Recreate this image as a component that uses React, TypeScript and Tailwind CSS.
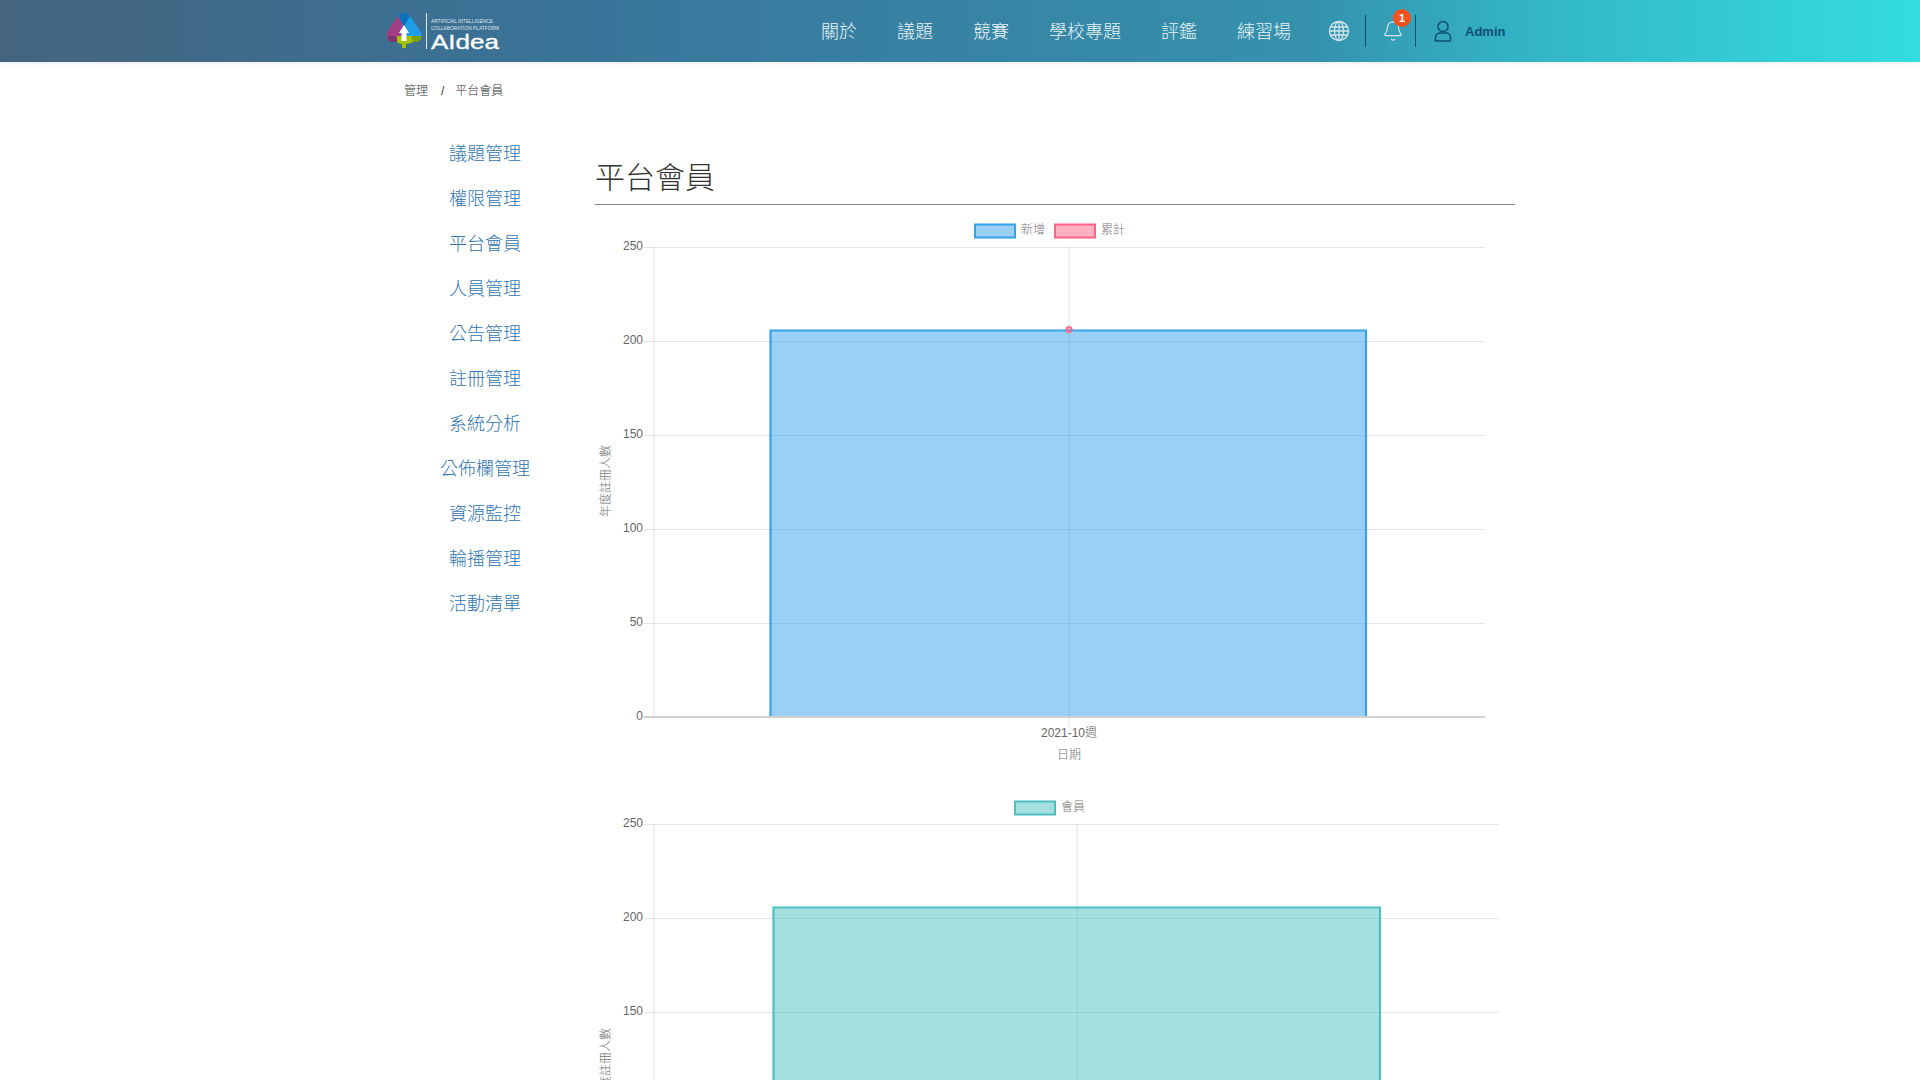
import { Bell } from 'lucide-react';

const navItems = ['關於', '議題', '競賽', '學校專題', '評鑑', '練習場'];

const sideItems = [
  '議題管理',
  '權限管理',
  '平台會員',
  '人員管理',
  '公告管理',
  '註冊管理',
  '系統分析',
  '公佈欄管理',
  '資源監控',
  '輪播管理',
  '活動清單',
];

function Logo() {
  return (
    <svg width="116" height="40" viewBox="0 0 116 40" className="block">
      <path d="M13 5 Q19 -2 25 5 L19 16 Z" fill="#0b72b9" />
      <path d="M25 5 L36 21 Q37 23 36.500 25 L19 25 L19 16 Z" fill="#1f9ce8" />
      <path d="M13 5 L2 21 Q0 28 5 31 L13 31 L19 16 Z" fill="#a23f83" />
      <path d="M2.500 25 L10 25 L13 31 L5 31 Q3 29 2.500 25 Z" fill="#7e3470" />
      <path d="M12 25 L27 25 L28 31 Q24 33 21 33 L21 37 L17 37 L17 33 Q14 33 12 31 Z" fill="#a4c400" />
      <path d="M27 25 L37 25 Q36 30 32 31 L28 31 Z" fill="#7f9f10" />
      <path d="M19 14 L24 22 L21.500 22 L21.500 30 L16.500 30 L16.500 22 L14 22 Z" fill="#ffffff" />
      <rect x="41" y="2" width="1" height="36" fill="#dfe8ee" />
      <text x="46" y="12" fontSize="5" fill="#dfe8ee" textLength="62" lengthAdjust="spacingAndGlyphs">ARTIFICIAL INTELLIGENCE</text>
      <text x="46" y="18.500" fontSize="5" fill="#dfe8ee" textLength="68" lengthAdjust="spacingAndGlyphs">COLLABORATION PLATFORM</text>
      <text x="46" y="38" fontSize="21" fill="#ffffff" stroke="#ffffff" strokeWidth="0.300" textLength="68" lengthAdjust="spacingAndGlyphs">AIdea</text>
    </svg>
  );
}

function GlobeIcon() {
  return (
    <svg width="22" height="22" viewBox="0 0 22 22" fill="none" stroke="#d5e6ec" strokeWidth="1.300" className="block">
      <circle cx="11" cy="11" r="9.500" />
      <ellipse cx="11" cy="11" rx="4.500" ry="9.500" />
      <path d="M11 1.500v19M2.500 7h17M2.500 15h17M1.500 11h19" />
    </svg>
  );
}

function UserIcon() {
  return (
    <svg width="18" height="22" viewBox="0 0 18 22" fill="none" stroke="#0f4c75" strokeWidth="1.500" className="block">
      <circle cx="9" cy="6.500" r="5" />
      <path d="M1.500 20v-2.500a4.500 4.500 0 0 1 4.500-4.500h6a4.500 4.500 0 0 1 4.500 4.500v2.500a1 1 0 0 1-1 1h-13.500a0.500 0.500 0 0 1-0.500-1z" />
    </svg>
  );
}

interface ChartProps {
  legend: { label: string; stroke: string; fill: string }[];
  legendX: number;
  right: number;
  center: number;
  barLeft: number;
  barRight: number;
  stroke: string;
  fill: string;
  titleY: number;
  point?: boolean;
}

const TICKS = [250, 200, 150, 100, 50, 0];
const LEFT = 59;
const TOP = 32;
const BOTTOM = 502;

// chart.js-looking bar chart, coordinates are local to the 920px wide svg
function BarChart({ legend, legendX, right, center, barLeft, barRight, stroke, fill, titleY, point }: ChartProps) {
  const y = (v: number) => Math.round(BOTTOM - (v * (BOTTOM - TOP)) / 250) + 0.5;
  const barTop = y(206);

  return (
    <svg width="920" height="577" viewBox="0 0 920 577" className="block">
      {legend.map((item, i) => (
        <g key={item.label}>
          <rect x={legendX + i * 80 + 1} y="9.500" width="40" height="13" fill={item.fill} stroke={item.stroke} strokeWidth="2" />
          <text x={legendX + i * 80 + 47} y="19" fontSize="12" fill="#777">{item.label}</text>
        </g>
      ))}

      {TICKS.map((t) => (
        <g key={t}>
          {t !== 0 && (
            <line x1={LEFT - 10} x2={right} y1={y(t)} y2={y(t)} stroke="rgba(0,0,0,0.1)" strokeWidth="1.200" />
          )}
          <text x={LEFT - 11} y={y(t) + 2.5} fontSize="12" fill="#666" textAnchor="end">{t}</text>
        </g>
      ))}
      <line x1={LEFT} x2={LEFT} y1={TOP} y2={BOTTOM} stroke="rgba(0,0,0,0.06)" strokeWidth="2" />
      <line x1={center} x2={center} y1={TOP} y2={BOTTOM + 10} stroke="rgba(0,0,0,0.06)" strokeWidth="2" />

      <rect x={barLeft} y={barTop} width={barRight - barLeft} height={BOTTOM - barTop} fill={fill} />
      <path
        d={`M${barLeft + 0.5} ${BOTTOM}V${barTop}H${barRight}V${BOTTOM}`}
        fill="none"
        stroke={stroke}
        strokeWidth="2.200"
      />
      <line x1={LEFT - 10} x2={right} y1={BOTTOM} y2={BOTTOM} stroke="#d0d0d0" strokeWidth="2" />
      {point && <circle cx={center} cy={barTop - 1} r="2.800" fill="rgba(255,99,132,0.5)" stroke="#ff6384" strokeWidth="1.500" />}

      <text x={center} y="522" fontSize="12" fill="#666" textAnchor="middle">2021-10週</text>
      <text x={center} y="544" fontSize="12" fill="#777" textAnchor="middle">日期</text>
      <text
        transform={`translate(15 ${titleY}) rotate(-90)`}
        fontSize="12"
        fill="#777"
        textAnchor="middle"
      >
        年度註冊人數
      </text>
    </svg>
  );
}

export default function App() {
  return (
    <div className="h-screen overflow-hidden bg-white font-['Liberation_Sans','Noto_Sans_CJK_TC',sans-serif] font-light text-[#333]">
      <header className="h-[62px] bg-[linear-gradient(90deg,#44647e_0%,#397499_30%,#3591ad_68%,#33b6c7_80%,#33dde0_100%)] shadow-[0_2px_6px_rgba(0,0,0,0.08)]">
        <div className="mx-auto flex h-full w-[1140px] items-center">
          <div className="-ml-[5px]">
            <Logo />
          </div>
          <nav className="ml-[300px] flex items-center pt-[1px]">
            {navItems.map((item) => (
              <a key={item} className="px-[20px] text-[18px] leading-[60px] text-[#e8f3f6]">
                {item}
              </a>
            ))}
          </nav>
          <div className="ml-[17px]">
            <GlobeIcon />
          </div>
          <div className="ml-[15px] h-[32px] w-px bg-[#0f4c75]" />
          <div className="relative ml-[16px]">
            <Bell size={22} strokeWidth={1.3} color="#d5e6ec" />
            <span className="absolute -right-[7px] -top-[11px] flex h-[18px] w-[18px] items-center justify-center rounded-full bg-[#f4511e] text-[11px] font-bold text-white">
              1
            </span>
          </div>
          <div className="ml-[11px] h-[32px] w-px bg-[#0f4c75]" />
          <div className="ml-[18px]">
            <UserIcon />
          </div>
          <span className="ml-[13px] pt-[1px] text-[13px] font-bold text-[#0f4c75]">Admin</span>
        </div>
      </header>

      <div className="mx-auto w-[1140px]">
        <div className="flex h-[57px] items-center pl-[14px] text-[12px] text-[#333]">
          <span>管理</span>
          <span className="ml-[13px] mr-[11px]">/</span>
          <span>平台會員</span>
        </div>

        <div className="flex">
          <aside className="w-[190px] pt-[13px]">
            {sideItems.map((item) => (
              <div key={item} className="h-[45px] text-center text-[18px] leading-[45px] text-[#2f75b5]">
                {item}
              </div>
            ))}
          </aside>

          <main className="ml-[15px] w-[920px]">
            <h1 className="mt-[32px] h-[54px] border-b border-[#888] text-[30px] font-light leading-[54px] text-[#333]">
              平台會員
            </h1>
            <div className="mt-[10px]">
              <BarChart
                legend={[
                  { label: '新增', stroke: '#36a2eb', fill: '#9bd0f5' },
                  { label: '累計', stroke: '#ff6384', fill: '#ffb1c1' },
                ]}
                legendX={379}
                right={890}
                center={474}
                barLeft={175}
                barRight={771}
                stroke="#36a2eb"
                fill="rgba(54,162,235,0.5)"
                titleY={266}
                point
              />
              <BarChart
                legend={[{ label: '會員', stroke: '#4bc0c0', fill: '#a5dfdf' }]}
                legendX={419}
                right={904}
                center={482}
                barLeft={178}
                barRight={785}
                stroke="#4bc0c0"
                fill="rgba(75,192,192,0.5)"
                titleY={272}
              />
            </div>
          </main>
        </div>
      </div>
    </div>
  );
}
